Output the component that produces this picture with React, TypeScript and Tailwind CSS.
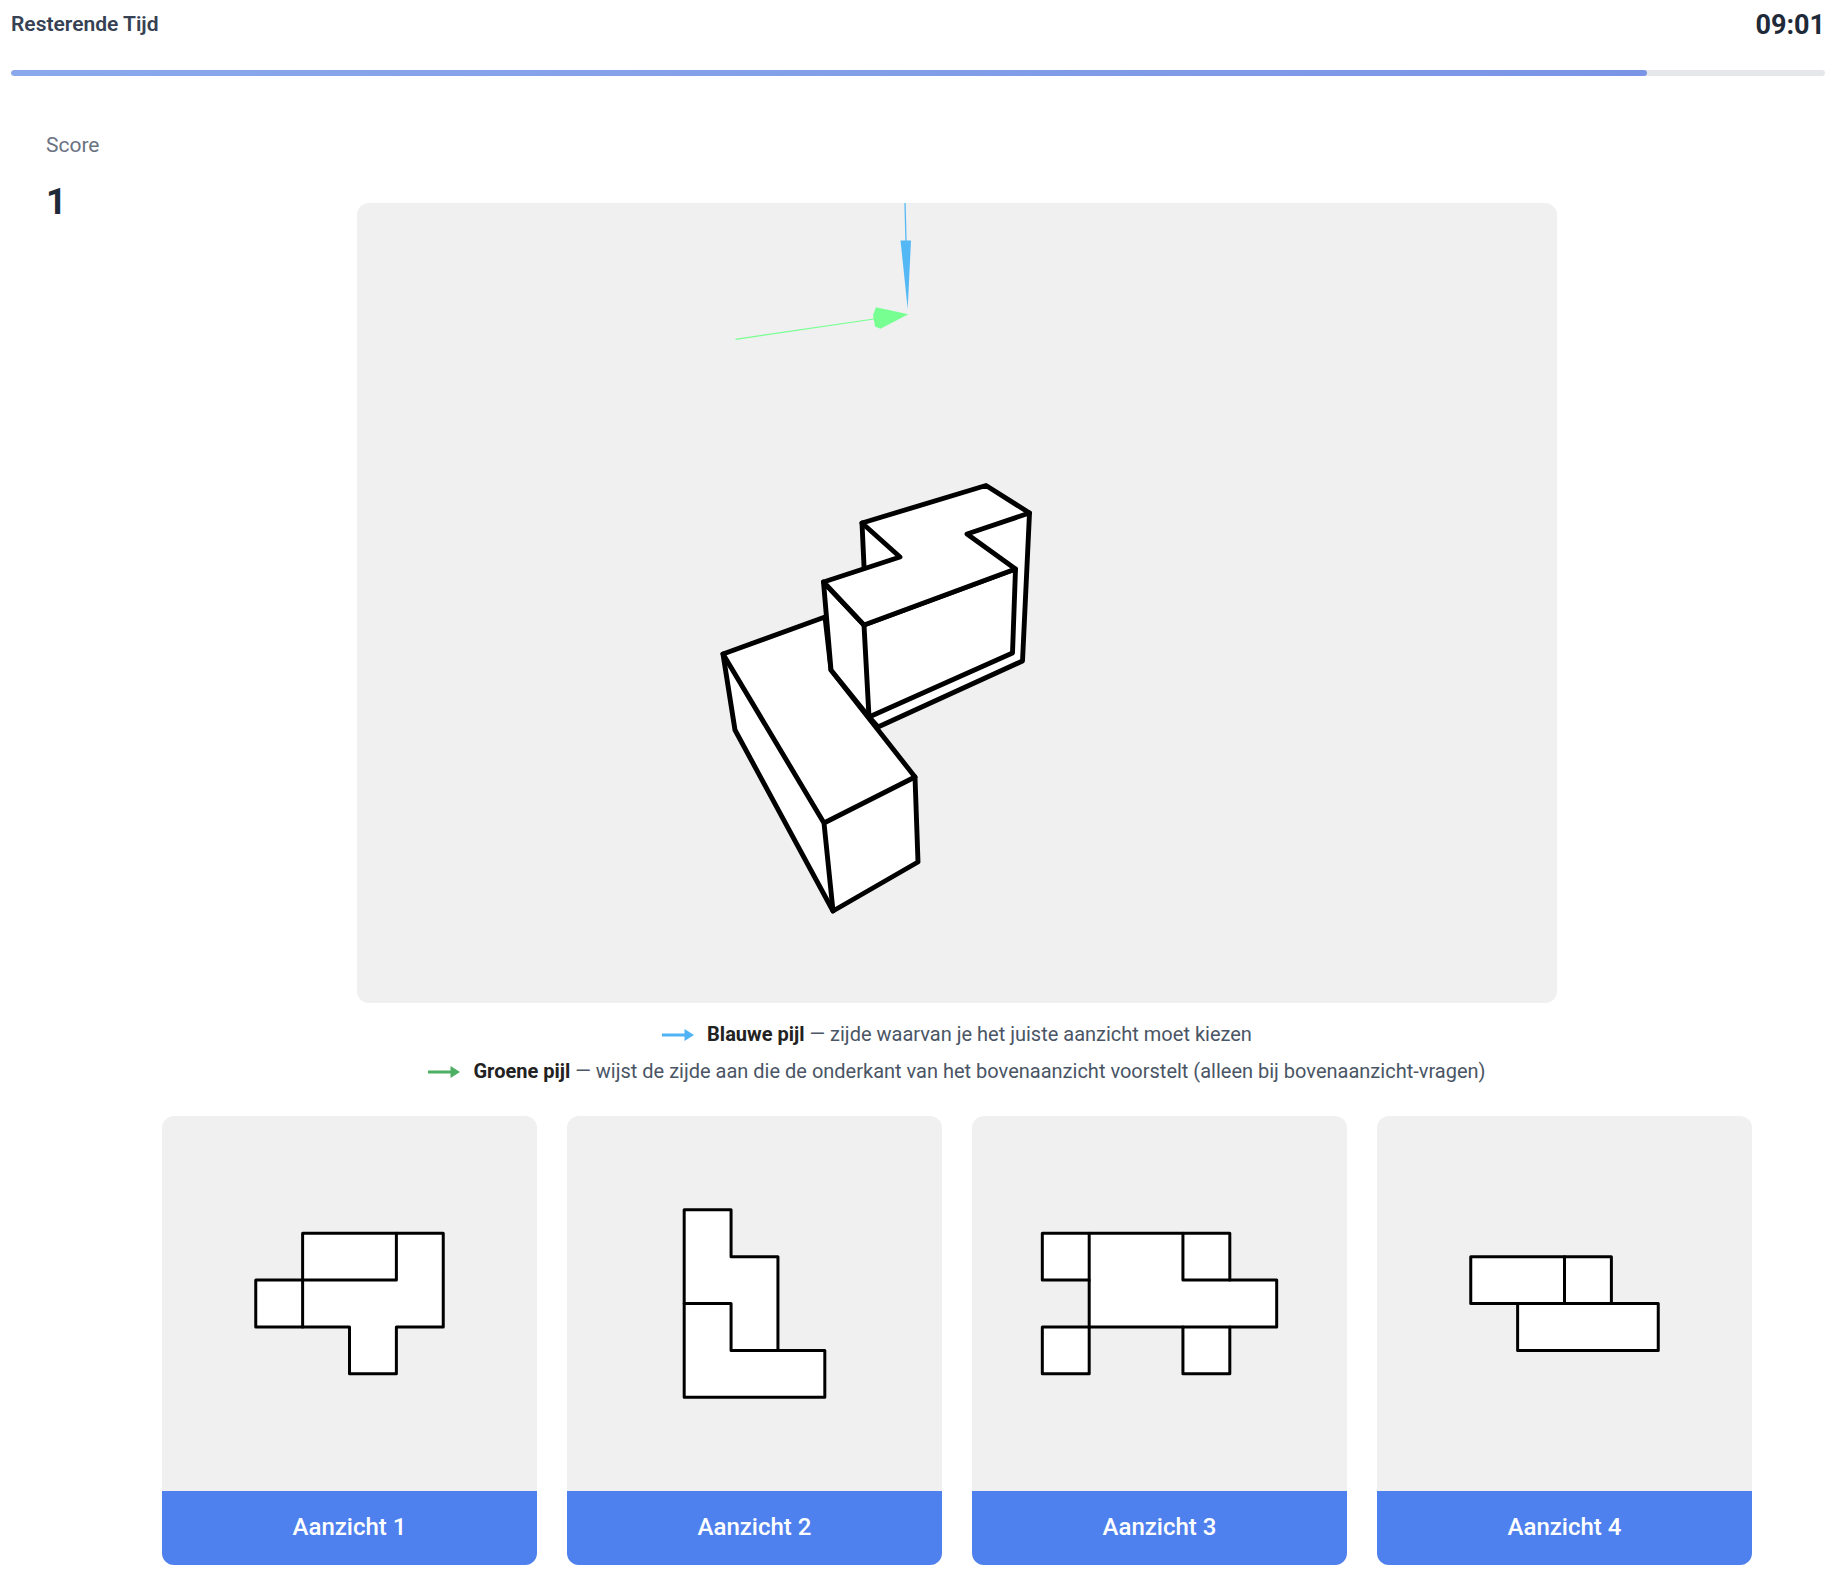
import React from 'react';

interface View {
  id: number;
  outline: string;
  inner: string;
}

// Flat views on an 80x80 grid, one cube is 10 units
const VIEWS: View[] = [
  { id: 1, outline: 'M30 25H60V45H50V55H40V45H20V35H30Z', inner: 'M30 45V35H50V25' },
  { id: 2, outline: 'M25 20H35V30H45V50H55V60H25Z', inner: 'M25 40H35V50H45' },
  {
    id: 3,
    outline: 'M15 25H55V35H65V45H55V55H45V45H25V55H15V45H25V35H15Z',
    inner: 'M25 25V35M45 25V35H55M45 45H55',
  },
  { id: 4, outline: 'M20 30H50V40H60V50H30V40H20Z', inner: 'M40 30V40M30 40H50' },
];

const TOTAL_SECONDS = 600;

function Timer({ secondsLeft }: { secondsLeft: number }) {
  const minutes = String(Math.floor(secondsLeft / 60)).padStart(2, '0');
  const seconds = String(secondsLeft % 60).padStart(2, '0');

  return (
    <header className="px-[11px] pt-[5px]">
      <div className="flex h-10 items-center justify-between">
        <span className="text-[21px] font-semibold text-gray-700">Resterende Tijd</span>
        <span className="text-[27px] font-bold text-gray-800">{minutes}:{seconds}</span>
      </div>
      <div className="mt-[25px] h-1.5 overflow-hidden rounded-full bg-gray-200">
        <div
          className="h-full rounded-full bg-linear-to-r from-[#8aa8ec] to-[#7a95e6]"
          style={{ width: `${(secondsLeft / TOTAL_SECONDS) * 100}%` }}
        />
      </div>
    </header>
  );
}

function Scene() {
  return (
    <svg viewBox="0 0 1200 800" className="block aspect-[3/2] w-full max-w-[1200px] rounded-xl bg-[#f0f0f0]">
      <path d="M548 0L549 38" stroke="#54b8f5" strokeWidth="1.3" />
      <path d="M543.5 37.5H554L550.7 106Z" fill="#54b8f5" />
      <path d="M378.5 136.3L517 116" stroke="#77ff92" strokeWidth="1.2" />
      <path d="M519 104.3L551.3 111.3L523.5 125.8L518 123.5L516 112Z" fill="#77ff92" />
      <g fill="#fff" stroke="#000" strokeWidth="4.9" strokeLinejoin="round" strokeLinecap="round">
        {/* sides of the back part */}
        <path d="M505 320L672.5 310L665.5 458L521 524L512 514L507 363Z" />
        {/* long block */}
        <path d="M366 451L468 414L474 467L558 574L561 659L476 708L378 527Z" />
        <path d="M366 451L467 620L558 574M467 620L476 708" fill="none" />
        {/* front sides */}
        <path d="M466.5 379L507 422L658.5 366L655.5 450L512 514L474 467Z" />
        <path d="M507 422L512 514" />
        {/* top face */}
        <path d="M505 320L629 282.5L672.5 310L610 331L658.5 366L507 422L466.5 379L543 354Z" />
      </g>
    </svg>
  );
}

function LegendArrow({ color }: { color: string }) {
  return (
    <svg viewBox="0 0 32 12" className="h-3 w-8 shrink-0" aria-hidden="true">
      <path d="M0 4.5H22.5V0L32 6L22.5 12V7.5H0Z" fill={color} />
    </svg>
  );
}

function Legend() {
  return (
    <div className="mt-[13px] text-xl leading-[37px] text-gray-600">
      <p className="flex items-center justify-center gap-[13px]">
        <LegendArrow color="#4fb3f5" />
        <span><strong className="font-bold text-[#222]">Blauwe pijl</strong> — zijde waarvan je het juiste aanzicht moet kiezen</span>
      </p>
      <p className="flex items-center justify-center gap-[13px]">
        <LegendArrow color="#4caf64" />
        <span><strong className="font-bold text-[#222]">Groene pijl</strong> — wijst de zijde aan die de onderkant van het bovenaanzicht voorstelt (alleen bij bovenaanzicht-vragen)</span>
      </p>
    </div>
  );
}

function ViewCard({ view }: { view: View }) {
  return (
    <div className="overflow-hidden rounded-xl bg-[#f0f0f0]">
      <svg viewBox="0 0 80 80" className="block aspect-square w-full">
        <g stroke="#000" strokeWidth="0.64" strokeLinejoin="round" strokeLinecap="round">
          <path d={view.outline} fill="#fff" />
          <path d={view.inner} fill="none" />
        </g>
      </svg>
      <button type="button" className="block h-[74px] w-full cursor-pointer bg-[#4f81ee] pb-0.5 text-2xl font-medium text-white">
        Aanzicht {view.id}
      </button>
    </div>
  );
}

export default function App() {
  return (
    <div className="min-h-screen bg-white pb-4 font-['Roboto',sans-serif]">
      <Timer secondsLeft={541} />
      <div className="flex pr-[22px]">
        <aside className="w-[100px] shrink-0 pt-[53px] pl-[46px]">
          <div className="text-[21px] leading-8 text-gray-500">Score</div>
          <div className="mt-[21px] text-4xl font-bold text-gray-800">1</div>
        </aside>
        <main className="flex min-w-0 flex-1 flex-col items-center pt-[127px]">
          <Scene />
          <Legend />
          <div className="mt-[26px] grid w-full max-w-[1590px] grid-cols-4 gap-[30px]">
            {VIEWS.map((view) => (
              <ViewCard key={view.id} view={view} />
            ))}
          </div>
        </main>
      </div>
    </div>
  );
}
